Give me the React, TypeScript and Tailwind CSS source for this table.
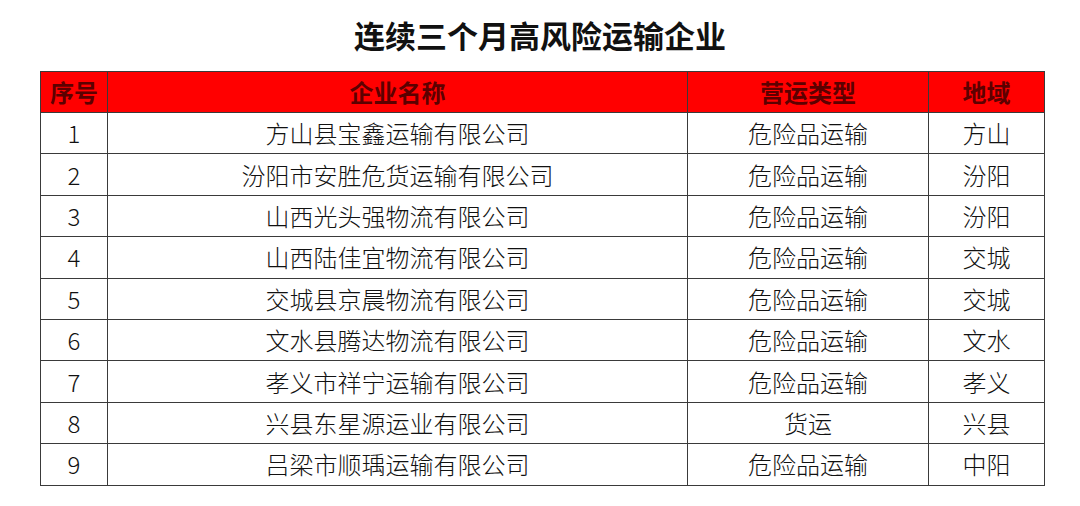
import React from "react";

const rows: [string, string, string, string][] = [
  ["1", "方山县宝鑫运输有限公司", "危险品运输", "方山"],
  ["2", "汾阳市安胜危货运输有限公司", "危险品运输", "汾阳"],
  ["3", "山西光头强物流有限公司", "危险品运输", "汾阳"],
  ["4", "山西陆佳宜物流有限公司", "危险品运输", "交城"],
  ["5", "交城县京晨物流有限公司", "危险品运输", "交城"],
  ["6", "文水县腾达物流有限公司", "危险品运输", "文水"],
  ["7", "孝义市祥宁运输有限公司", "危险品运输", "孝义"],
  ["8", "兴县东星源运业有限公司", "货运", "兴县"],
  ["9", "吕梁市顺瑀运输有限公司", "危险品运输", "中阳"],
];

export default function App() {
  return (
    <div
      className="w-[1080px] h-[506px] bg-white"
      style={{ fontFamily: '"Noto Sans CJK SC", "Noto Sans", sans-serif' }}
    >
      <div className="h-[71px] flex items-center justify-center pb-[2px]">
        <h1 className="text-[31px] font-bold text-[#111] leading-none">连续三个月高风险运输企业</h1>
      </div>
      <div className="px-[40px]">
        <table className="w-[1004px] border-collapse table-fixed">
          <colgroup>
            <col className="w-[67px]" />
            <col className="w-[580px]" />
            <col className="w-[241px]" />
            <col className="w-[116px]" />
          </colgroup>
          <thead>
            <tr className="h-[41px] bg-[#ff0000]">
              {["序号", "企业名称", "营运类型", "地域"].map((h) => (
                <th
                  key={h}
                  className="border border-[#3a3a3a] text-[24px] font-bold text-[#5c0000] leading-none p-0 text-center"
                >
                  {h}
                </th>
              ))}
            </tr>
          </thead>
          <tbody>
            {rows.map((r) => (
              <tr key={r[0]} className="h-[41.4px]">
                {r.map((c, i) => (
                  <td
                    key={i}
                    className="border border-[#3a3a3a] text-[24px] font-light text-[#111] leading-none p-0 text-center"
                  >
                    {c}
                  </td>
                ))}
              </tr>
            ))}
          </tbody>
        </table>
      </div>
    </div>
  );
}
